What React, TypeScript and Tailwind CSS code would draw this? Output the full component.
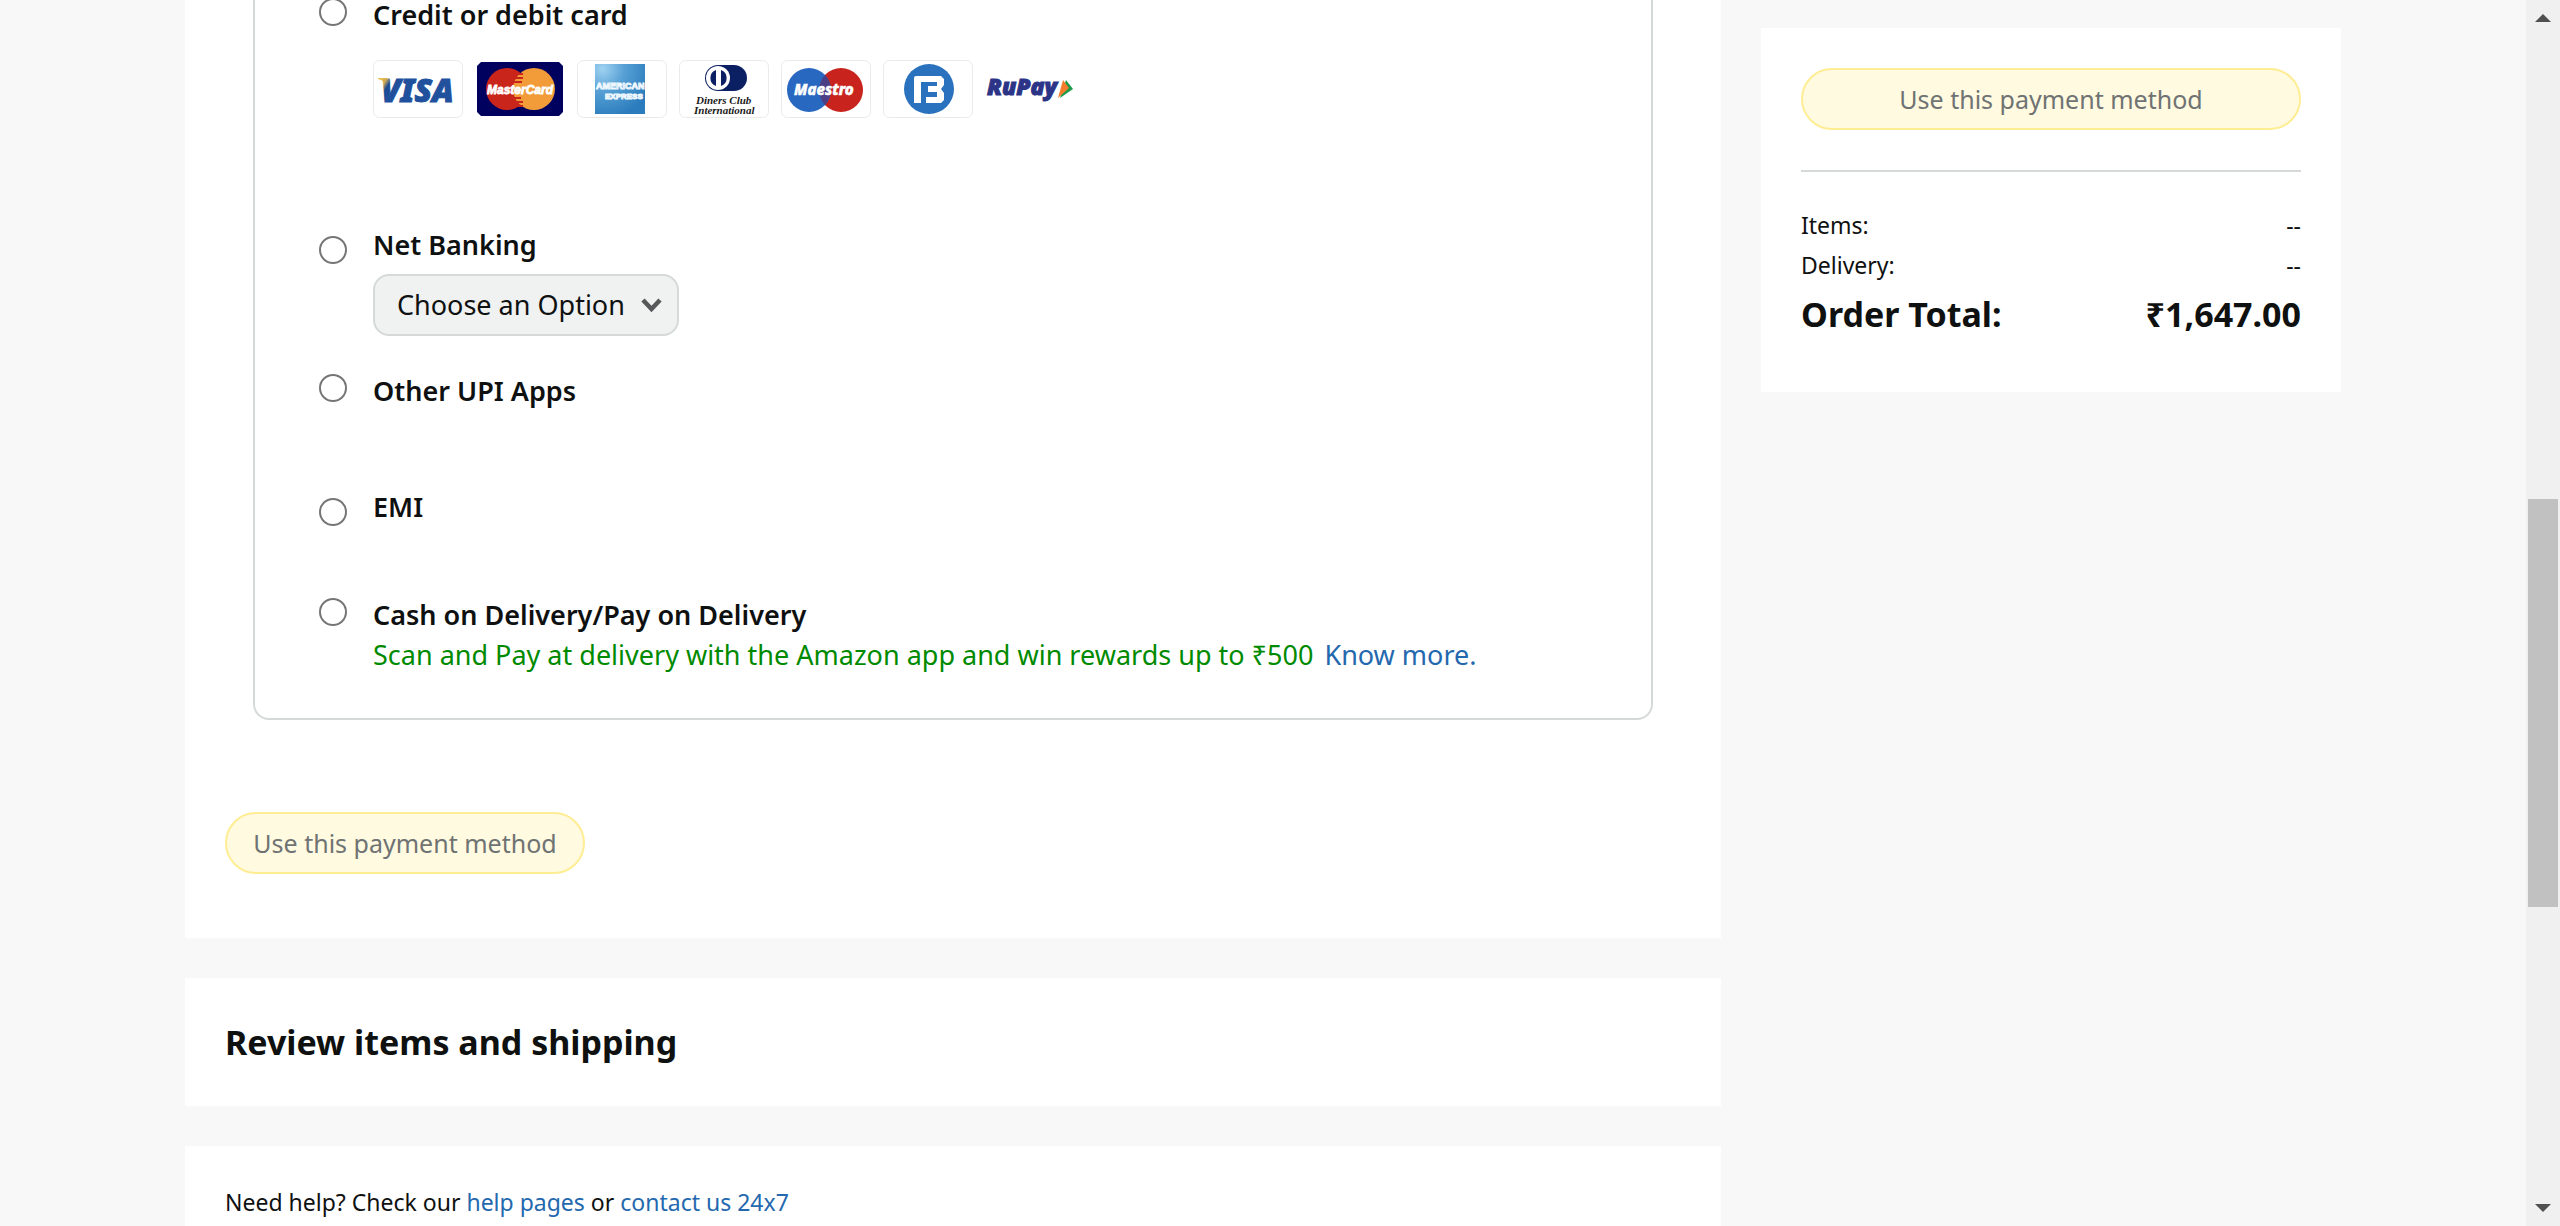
import type { ReactNode } from "react";

const LABEL = "text-[27px] leading-10 font-semibold";
const LINK = "text-[#2468ae] hover:underline";

function CardFrame() {
  return <rect x="0.5" y="0.5" width="89" height="57" rx="6" fill="#fff" stroke="#eaeaea" />;
}

function VisaLogo() {
  return (
    <svg width="90" height="58" viewBox="0 0 90 58" role="img" aria-label="Visa">
      <defs>
        <linearGradient id="visa" gradientUnits="userSpaceOnUse" x1="7" y1="18" x2="22" y2="28">
          <stop offset="0" stopColor="#e8b23a" />
          <stop offset="0.35" stopColor="#c9a85a" />
          <stop offset="0.6" stopColor="#1b4a93" />
          <stop offset="1" stopColor="#21509c" />
        </linearGradient>
      </defs>
      <CardFrame />
      <path d="M5 18h9l3 5-3 5C13 22 9 20 5 19z" fill="#e6bf55" />
      <text x="8" y="42" fontFamily="Noto Sans, sans-serif" fontSize="32" fontWeight="900" fontStyle="italic" fill="url(#visa)" stroke="url(#visa)" strokeWidth="1">
        VISA
      </text>
    </svg>
  );
}

function MasterCardLogo() {
  return (
    <svg width="90" height="58" viewBox="0 0 90 58" role="img" aria-label="MasterCard">
      <path d="M6 2h78l4 4v46l-4 4H6l-4-4V6z" fill="#00005e" />
      <circle cx="32" cy="29" r="21" fill="#c9251b" />
      <circle cx="59" cy="29" r="21" fill="#f19c38" />
      <path d="M42 14h6M40 18h8M39 22h8M38 38h8M39 42h9M42 46h6" stroke="#c9251b" strokeWidth="2" />
      <text x="12" y="34" fontFamily="Liberation Sans, sans-serif" fontSize="12" fontWeight="700" fontStyle="italic" fill="#fff" stroke="#fff" strokeWidth="0.8">
        MasterCard
      </text>
    </svg>
  );
}

function AmexLogo() {
  return (
    <svg width="90" height="58" viewBox="0 0 90 58" role="img" aria-label="American Express">
      <defs>
        <radialGradient id="amex" cx="0.15" cy="0.1" r="1">
          <stop offset="0" stopColor="#9fd2f1" />
          <stop offset="0.45" stopColor="#559fd4" />
          <stop offset="1" stopColor="#2b7cbd" />
        </radialGradient>
      </defs>
      <CardFrame />
      <rect x="18" y="4" width="50" height="50" fill="url(#amex)" />
      <g fontFamily="Liberation Sans, sans-serif" fontWeight="700" fill="#8fc4e8" stroke="#eef7fd" strokeWidth="1">
        <text x="19" y="29" fontSize="9">AMERICAN</text>
        <text x="28" y="39" fontSize="8">EXPRESS</text>
      </g>
    </svg>
  );
}

function DinersLogo() {
  return (
    <svg width="90" height="58" viewBox="0 0 90 58" role="img" aria-label="Diners Club International">
      <CardFrame />
      <rect x="26" y="5" width="42" height="26" rx="13" fill="#0b1f63" />
      <circle cx="39" cy="18" r="12" fill="#fff" />
      <path d="M37 10a8.500 8.500 0 0 0 0 16zM42 10a8.500 8.500 0 0 1 0 16z" fill="#0b1f63" />
      <g fontFamily="Liberation Serif, serif" fontSize="11" fontWeight="700" fontStyle="italic" fill="#1a1a1a">
        <text x="17" y="44">Diners Club</text>
        <text x="15" y="54">International</text>
      </g>
    </svg>
  );
}

function MaestroLogo() {
  return (
    <svg width="90" height="58" viewBox="0 0 90 58" role="img" aria-label="Maestro">
      <CardFrame />
      <circle cx="60" cy="30" r="22" fill="#c8231c" />
      <circle cx="28" cy="30" r="22" fill="#2868c0" />
      <path d="M44 15a22 22 0 0 1 0 30a22 22 0 0 1 0-30z" fill="#4c3f86" />
      <text x="13" y="35" fontFamily="Noto Sans, sans-serif" fontSize="15" fontWeight="800" fontStyle="italic" fill="#fff" stroke="#fff" strokeWidth="0.5">
        Maestro
      </text>
    </svg>
  );
}

function BajajLogo() {
  return (
    <svg width="90" height="58" viewBox="0 0 90 58" role="img" aria-label="Bajaj Finserv">
      <CardFrame />
      <circle cx="46" cy="29" r="25" fill="#2a72bd" />
      <path
        d="M31 43V18q0-2 2-2h25l3 3v6l-3 4 3 4v7l-3 3H43v-6h11v-5h-9v-6h9v-4H38v21z"
        fill="#fff"
      />
    </svg>
  );
}

function RuPayLogo() {
  return (
    <svg width="90" height="58" viewBox="0 0 90 58" role="img" aria-label="RuPay">
      <path d="M81 20l7 9-13 9z" fill="#1f9a4a" />
      <path d="M78 20l6 8-11 10z" fill="#f47c2c" />
      <text x="2" y="35" fontFamily="Noto Sans, sans-serif" fontSize="23" fontWeight="900" fontStyle="italic" fill="#2b3486" stroke="#2b3486" strokeWidth="1">
        RuPay
      </text>
    </svg>
  );
}

function PaymentOption({
  id,
  label,
  low = false,
  className = "",
  children,
}: {
  id: string;
  label: string;
  low?: boolean;
  className?: string;
  children?: ReactNode;
}) {
  return (
    <div className={`flex items-start gap-[26px] ${className}`}>
      <input
        id={id}
        type="radio"
        name="payment"
        className={`size-7 shrink-0 appearance-none rounded-full border-2 border-[#767676] bg-white checked:border-8 ${low ? "mt-[11px]" : "mt-[3px]"}`}
      />
      <div className="min-w-0 flex-1">
        <label htmlFor={id} className={`block ${LABEL}`}>
          {label}
        </label>
        {children}
      </div>
    </div>
  );
}

function PayButton({ className = "" }: { className?: string }) {
  return (
    <button
      type="button"
      className={`block h-[62px] rounded-full border-2 border-[#ffed94] bg-[#fffae0] px-4 text-[25px] leading-10 whitespace-nowrap text-[#6f7373] ${className}`}
    >
      Use this payment method
    </button>
  );
}

function ScrollBar() {
  return (
    <div aria-hidden="true" className="flex w-[34px] shrink-0 flex-col items-center bg-[#f0f0f0] py-3.5">
      <svg width="16" height="8" viewBox="0 0 16 8">
        <path d="M8 0l8 8H0z" fill="#505050" />
      </svg>
      <div className="flex w-full flex-1 flex-col px-0.5">
        <div className="grow-[477]" />
        <div className="grow-[408] bg-[#c1c1c1]" />
        <div className="grow-[297]" />
      </div>
      <svg width="16" height="8" viewBox="0 0 16 8">
        <path d="M0 0h16L8 8z" fill="#505050" />
      </svg>
    </div>
  );
}

export default function App() {
  return (
    <div className="flex h-screen overflow-hidden bg-[#f8f8f8] font-['Noto_Sans',sans-serif] text-[#0f1111]">
      <div className="flex min-w-0 flex-1 justify-center">
        <div className="flex w-full max-w-[2156px] items-start gap-10">
          <main className="flex min-w-0 flex-1 flex-col gap-10">
            <section className="bg-white px-10 pb-16">
              <div className="mx-7 rounded-b-2xl border-2 border-t-0 border-[#d5d9d9] pr-10 pb-[43px] pl-16">
                <PaymentOption id="card" label="Credit or debit card" className="-mt-[5px]">
                  <div className="mt-[25px] flex gap-3">
                    <VisaLogo />
                    <MasterCardLogo />
                    <AmexLogo />
                    <DinersLogo />
                    <MaestroLogo />
                    <BajajLogo />
                    <RuPayLogo />
                  </div>
                </PaymentOption>
                <PaymentOption id="netbanking" label="Net Banking" low className="mt-[107px]">
                  <div className="relative mt-[9px] w-fit">
                    <select
                      aria-label="Bank"
                      className="block h-[62px] w-[306px] appearance-none rounded-2xl border-2 border-[#d5d9d9] bg-[#f0f2f2] pr-11 pl-[22px] text-[27px] leading-10"
                    >
                      <option>Choose an Option</option>
                    </select>
                    <svg className="pointer-events-none absolute top-6 right-[17px]" width="21" height="15" viewBox="0 0 21 15" fill="none">
                      <path d="M2 2l8.500 9L19 2" stroke="#565959" strokeWidth="4.500" />
                    </svg>
                  </div>
                </PaymentOption>
                <PaymentOption id="upi" label="Other UPI Apps" className="mt-[35px]" />
                <PaymentOption id="emi" label="EMI" low className="mt-[76px]" />
                <PaymentOption id="cod" label="Cash on Delivery/Pay on Delivery" className="mt-[68px]">
                  <p className="text-[27px] leading-10 text-[#008a00]">
                    Scan and Pay at delivery with the Amazon app and win rewards up to ₹500{" "}
                    <a href="#know-more" className={`ml-1 ${LINK}`}>
                      Know more.
                    </a>
                  </p>
                </PaymentOption>
              </div>
              <PayButton className="mt-[92px] w-[360px]" />
            </section>
            <section className="bg-white p-10">
              <h2 className="text-[34px] leading-12 font-bold">Review items and shipping</h2>
            </section>
            <section className="bg-white p-10">
              <p className="text-[23px] leading-8">
                Need help? Check our{" "}
                <a href="#help" className={LINK}>
                  help pages
                </a>{" "}
                or{" "}
                <a href="#contact" className={LINK}>
                  contact us 24x7
                </a>
              </p>
            </section>
          </main>
          <aside className="mt-7 w-[580px] shrink-0 bg-white px-10 pt-10 pb-[54px]">
            <PayButton className="w-full" />
            <hr className="mt-10 mb-[33px] border-t-2 border-[#d5d9d9]" />
            <dl className="text-[23px] leading-10">
              <div className="flex justify-between">
                <dt>Items:</dt>
                <dd>--</dd>
              </div>
              <div className="flex justify-between">
                <dt>Delivery:</dt>
                <dd>--</dd>
              </div>
              <div className="mt-[5px] flex justify-between text-[34px] leading-12 font-bold">
                <dt>Order Total:</dt>
                <dd>₹1,647.00</dd>
              </div>
            </dl>
          </aside>
        </div>
      </div>
      <ScrollBar />
    </div>
  );
}
